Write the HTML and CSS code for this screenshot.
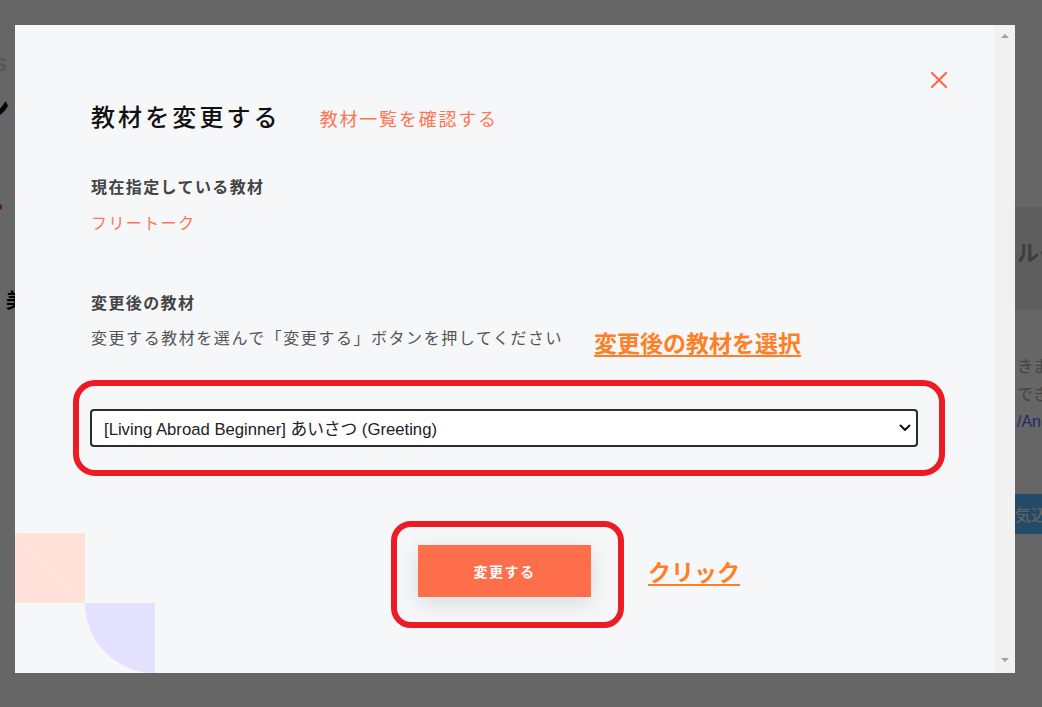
FILE: index.html
```html
<!DOCTYPE html>
<html lang="ja">
<head>
<meta charset="utf-8">
<title>教材を変更する</title>
<link rel="stylesheet" href="styles.css">
</head>
<body>
<div class="page">
  <div class="page-left">
    <div class="bg-row bg-s"><span>Lessons</span></div>
    <div class="bg-row bg-heading"><span>レッスン</span></div>
    <div class="bg-row bg-dotrow"><span class="bg-dot"></span></div>
    <div class="bg-kanji">美</div>
  </div>
  <div class="page-main"></div>
  <div class="page-right">
    <div class="bg-panel">ルール</div>
    <div class="bg-list">
      <div class="bg-text">きます</div>
      <div class="bg-text">できます</div>
      <div class="bg-link">/And</div>
    </div>
    <div class="bg-btn">気込み</div>
  </div>
</div>

<div class="overlay">
  <div class="modal">
    <div class="deco-square"></div>
    <div class="deco-quarter"></div>

    <div class="modal-body">
      <div class="title-row">
        <h2 class="title">教材を変更する</h2>
        <a class="list-link">教材一覧を確認する</a>
      </div>

      <div class="label label-current">現在指定している教材</div>
      <div class="current-value">フリートーク</div>

      <div class="label label-new">変更後の教材</div>
      <div class="desc-row">
        <p class="desc">変更する教材を選んで「変更する」ボタンを押してください</p>
        <span class="note note-select">変更後の教材を選択</span>
      </div>

      <div class="mark mark-select">
        <div class="select">
          <span class="select-text">[Living Abroad Beginner] あいさつ (Greeting)</span>
          <svg class="chevron" width="12" height="8" viewBox="0 0 12 8"><path d="M1.5 1.5 L6 6 L10.5 1.5" fill="none" stroke="#111" stroke-width="2" stroke-linecap="round" stroke-linejoin="round"/></svg>
        </div>
      </div>

      <div class="button-row">
        <div class="mark mark-button">
          <button class="submit">変更する</button>
          <span class="note note-click">クリック</span>
        </div>
      </div>
    </div>

    <div class="scrollbar">
      <span class="arrow arrow-up"></span>
      <span class="arrow arrow-down"></span>
    </div>

    <button class="close" aria-label="閉じる">
      <svg width="16" height="16" viewBox="0 0 16 16"><path d="M1 1 L15 15 M15 1 L1 15" stroke="#ff6a4c" stroke-width="2.2" stroke-linecap="square"/></svg>
    </button>
  </div>
</div>
</body>
</html>
```

FILE: styles.css
```css
* { box-sizing: border-box; }

html, body {
  margin: 0;
  padding: 0;
  width: 1042px;
  height: 707px;
  overflow: hidden;
  background: #ffffff;
  font-family: "Noto Sans CJK JP", "Noto Sans", sans-serif;
}

/* ---------- page behind the overlay ---------- */
.page {
  display: grid;
  grid-template-columns: 15px 1fr 27px;
  height: 707px;
}

.page-left {
  overflow: hidden;
}

.bg-row {
  display: flex;
  justify-content: flex-end;
  white-space: nowrap;
}

.bg-s {
  margin-top: 50px;
  font-family: "Liberation Sans", sans-serif;
  font-weight: 700;
  font-size: 23px;
  line-height: 26px;
  color: #dcdcdc;
  padding-right: 8px;
}

.bg-heading {
  margin-top: 12px;
  font-size: 34px;
  font-weight: 700;
  line-height: 40px;
  color: #000;
  padding-right: 5px;
}

.bg-dotrow {
  margin-top: 76px;
  padding-right: 13px;
}

.bg-dot {
  display: block;
  width: 6px;
  height: 6px;
  border-radius: 50%;
  background: #e23a1a;
}

.bg-kanji {
  margin-top: 78px;
  padding-left: 6px;
  font-size: 20px;
  font-weight: 700;
  line-height: 24px;
  color: #000;
  white-space: nowrap;
}

.page-right {
  overflow: hidden;
  padding-top: 207px;
  white-space: nowrap;
}

.bg-panel {
  height: 103px;
  background: #ececec;
  padding: 29px 0 0 2px;
  font-size: 22px;
  font-weight: 700;
  line-height: 30px;
  color: #9a9a9a;
}

.bg-list {
  margin-top: 37px;
  border-top: 1px solid #f4f4f4;
  padding: 3px 0 0 2px;
}

.bg-text {
  font-size: 16px;
  line-height: 28px;
  color: #aaaaaa;
}

.bg-link {
  font-family: "Liberation Sans", sans-serif;
  font-size: 16px;
  line-height: 30px;
  color: #6e5cff;
}

.bg-btn {
  margin-top: 57px;
  height: 40px;
  background: #58b9ff;
  color: #ffffff;
  font-size: 16px;
  line-height: 40px;
}

/* ---------- overlay & modal ---------- */
.overlay {
  position: fixed;
  inset: 0;
  background: rgba(0, 0, 0, 0.6);
  padding: 25px 0 0 15px;
}

.modal {
  position: relative;
  width: 1000px;
  height: 648px;
  background: #f6f7f9;
  display: flex;
  overflow: hidden;
}

.deco-square {
  position: absolute;
  left: 0;
  top: 508px;
  width: 70px;
  height: 70px;
  background: linear-gradient(to top right, #ffe1d9 49.4%, #ffe7e0 50%, #ffe1d9 50.6%);
}

.deco-quarter {
  position: absolute;
  left: 70px;
  top: 578px;
  width: 70px;
  height: 70px;
  background: #e4e0ff;
  border-bottom-left-radius: 70px;
}

.modal-body {
  position: relative;
  z-index: 1;
  flex: 1;
  padding: 75px 76px 0;
}

.title-row {
  display: flex;
  align-items: baseline;
  gap: 39px;
  height: 32px;
}

.title {
  margin: 0;
  font-size: 24px;
  font-weight: 500;
  line-height: 32px;
  letter-spacing: 3.1px;
  color: #111111;
}

.list-link {
  font-size: 18px;
  line-height: 32px;
  letter-spacing: 1.8px;
  color: #ff7454;
  cursor: pointer;
}

.label {
  font-size: 16px;
  font-weight: 700;
  line-height: 24px;
  letter-spacing: 1.4px;
  color: #444444;
}

.label-current { margin-top: 42px; }

.current-value {
  margin-top: 12px;
  font-size: 16px;
  line-height: 24px;
  letter-spacing: 1.4px;
  color: #ff7454;
}

.label-new { margin-top: 56px; }

.desc-row {
  display: flex;
  align-items: flex-start;
  gap: 31px;
  margin-top: 11px;
}

.desc {
  margin: 0;
  font-size: 16px;
  line-height: 24px;
  letter-spacing: 1.55px;
  color: #555555;
  white-space: nowrap;
}

.note {
  font-size: 23px;
  font-weight: 700;
  line-height: 30px;
  color: #ff7f27;
  text-decoration: underline;
  text-decoration-thickness: 2px;
  text-underline-offset: 3px;
  white-space: nowrap;
}

.note-select { margin-top: 2px; }

.mark {
  border: 6px solid #ed1c24;
}

.mark-select {
  margin: 23px -27px 0 -18px;
  height: 96px;
  border-radius: 22px;
  padding: 23px 21px 23px 11px;
}

.select {
  height: 38px;
  background: #ffffff;
  border: 2px solid #2b2b2b;
  border-radius: 4px;
  display: flex;
  align-items: center;
  justify-content: space-between;
  padding: 0 5px 0 12px;
}

.select-text {
  font-family: "Liberation Sans", "Noto Sans CJK JP", sans-serif;
  font-size: 16.7px;
  color: #222222;
}

.button-row {
  display: flex;
  justify-content: center;
  margin: 45px -76px 0;
}

.mark-button {
  position: relative;
  margin-left: 6px;
  width: 233px;
  height: 107px;
  border-radius: 20px;
  padding: 18px 0 0 21px;
}

.submit {
  display: block;
  width: 173px;
  height: 52px;
  border: 0;
  padding: 0;
  background: #ff6e4b;
  color: #ffffff;
  font-family: "Noto Sans CJK JP", sans-serif;
  font-size: 14px;
  font-weight: 700;
  letter-spacing: 1.5px;
  box-shadow: 0 6px 22px rgba(0, 0, 0, 0.12);
}

.note-click {
  position: absolute;
  left: 251px;
  top: 29px;
}

.scrollbar {
  width: 21px;
  background: #f1f1f1;
  display: flex;
  flex-direction: column;
  justify-content: space-between;
  align-items: center;
  padding: 9px 0 11px;
}

.arrow {
  display: block;
  width: 0;
  height: 0;
  border-left: 4px solid transparent;
  border-right: 4px solid transparent;
}

.arrow-up { border-bottom: 4px solid #a3a3a3; }
.arrow-down { border-top: 4px solid #a3a3a3; }

.close {
  position: absolute;
  z-index: 2;
  top: 47px;
  right: 68px;
  width: 16px;
  height: 16px;
  padding: 0;
  border: 0;
  background: transparent;
  display: flex;
}
```
